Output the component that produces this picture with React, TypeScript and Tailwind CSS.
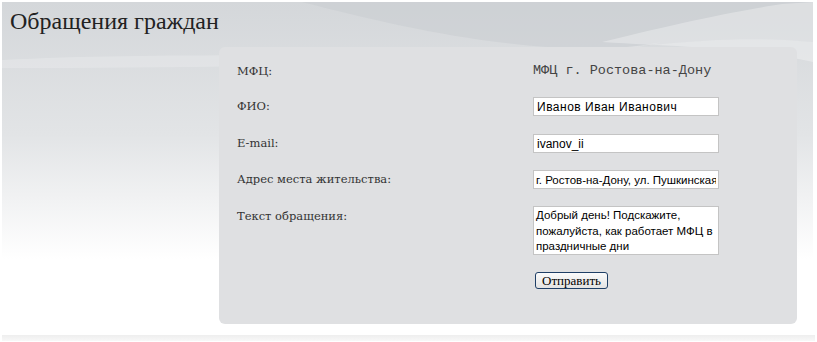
import React from "react";

const label = "text-[11.5px] text-[#333] [font-family:'DejaVu_Serif',serif]";
const field =
  "w-[186px] h-[19px] bg-white border border-[#c4c4c4] px-[3px] text-[12px] text-black outline-none [font-family:'Liberation_Sans',Arial,sans-serif]";

// Background swooshes behind the header
function Waves() {
  return (
    <svg
      className="absolute inset-0 w-full h-full"
      viewBox="0 0 811 330"
      preserveAspectRatio="none"
    >
      <defs>
        <linearGradient id="bg" x1="0" y1="0" x2="0" y2="1">
          <stop offset="0" stopColor="#d4d7da" />
          <stop offset="0.4" stopColor="#e2e4e6" />
          <stop offset="0.78" stopColor="#ffffff" />
          <stop offset="1" stopColor="#ffffff" />
        </linearGradient>
      </defs>
      <rect width="811" height="330" fill="url(#bg)" />
      <path d="M300 0 C380 20 460 40 560 46 C640 50 700 30 811 40 V0 Z" fill="#c8ccd0" opacity="0.5" />
      <path d="M600 40 C680 20 740 8 780 2 L811 0 V60 C740 45 680 45 600 40 Z" fill="#ffffff" opacity="0.3" />
      <path d="M0 58 C150 50 300 56 560 50 C600 48 640 44 660 40 C600 58 300 66 0 66 Z" fill="#ffffff" opacity="0.2" />
    </svg>
  );
}

export default function App() {
  return (
    <div className="w-[817px] h-[342px] bg-white pt-[2px] px-[2px] overflow-hidden">
      <div className="relative w-[811px] h-[330px]">
        <Waves />
        <div className="relative flex flex-col h-full">
          <h1 className="pl-[8px] pt-[4px] h-[45px] text-[24px] leading-[30px] text-[#222] [font-family:'Liberation_Serif','Times_New_Roman',serif]">
            Обращения граждан
          </h1>
          <div className="ml-[217px] w-[578px] h-[277px] rounded-[6px] bg-[#dfe0e2] pt-[15px] pl-[18px]">
            <div className="flex items-center h-[19px]">
              <div className={`w-[296px] ${label}`}>МФЦ:</div>
              <div className="text-[13.5px] text-[#444] [font-family:'Liberation_Mono','Courier_New',monospace]">
                МФЦ г. Ростова-на-Дону
              </div>
            </div>
            <div className="flex items-center h-[19px] mt-[16px]">
              <div className={`w-[296px] ${label}`}>ФИО:</div>
              <input className={`${field} tracking-[0.5px]`} defaultValue="Иванов Иван Иванович" />
            </div>
            <div className="flex items-center h-[19px] mt-[18px]">
              <div className={`w-[296px] ${label}`}>E-mail:</div>
              <input className={field} defaultValue="ivanov_ii" />
            </div>
            <div className="flex items-center h-[19px] mt-[17px]">
              <div className={`w-[296px] ${label}`}>Адрес места жительства:</div>
              <input
                className="w-[186px] h-[19px] bg-white border border-[#c4c4c4] px-[2px] text-[11.5px] text-black outline-none [font-family:'Liberation_Sans',Arial,sans-serif]"
                defaultValue="г. Ростов-на-Дону, ул. Пушкинская"
              />
            </div>
            <div className="flex items-start mt-[17px]">
              <div className={`w-[296px] pt-[2px] ${label}`}>Текст обращения:</div>
              <textarea
                className="w-[186px] h-[49px] resize-none bg-white border border-[#c4c4c4] px-[2px] pt-[1px] text-[11.5px] leading-[15.5px] text-black outline-none overflow-hidden [font-family:'Liberation_Sans',Arial,sans-serif]"
                defaultValue="Добрый день! Подскажите, пожалуйста, как работает МФЦ в праздничные дни"
              />
            </div>
            <div className="flex mt-[17px]">
              <div className="w-[298px]" />
              <button className="h-[17px] px-[6px] rounded-[3px] border border-[#1f3f66] bg-gradient-to-b from-[#fbfbfb] to-[#e3e3e3] text-[13px] leading-[15px] text-black [font-family:'Liberation_Serif',serif]">
                Отправить
              </button>
            </div>
          </div>
        </div>
      </div>
      <div className="mt-[3px] h-[6px] bg-gradient-to-b from-[#eeeeee] to-[#f8f8f8]" />
    </div>
  );
}
